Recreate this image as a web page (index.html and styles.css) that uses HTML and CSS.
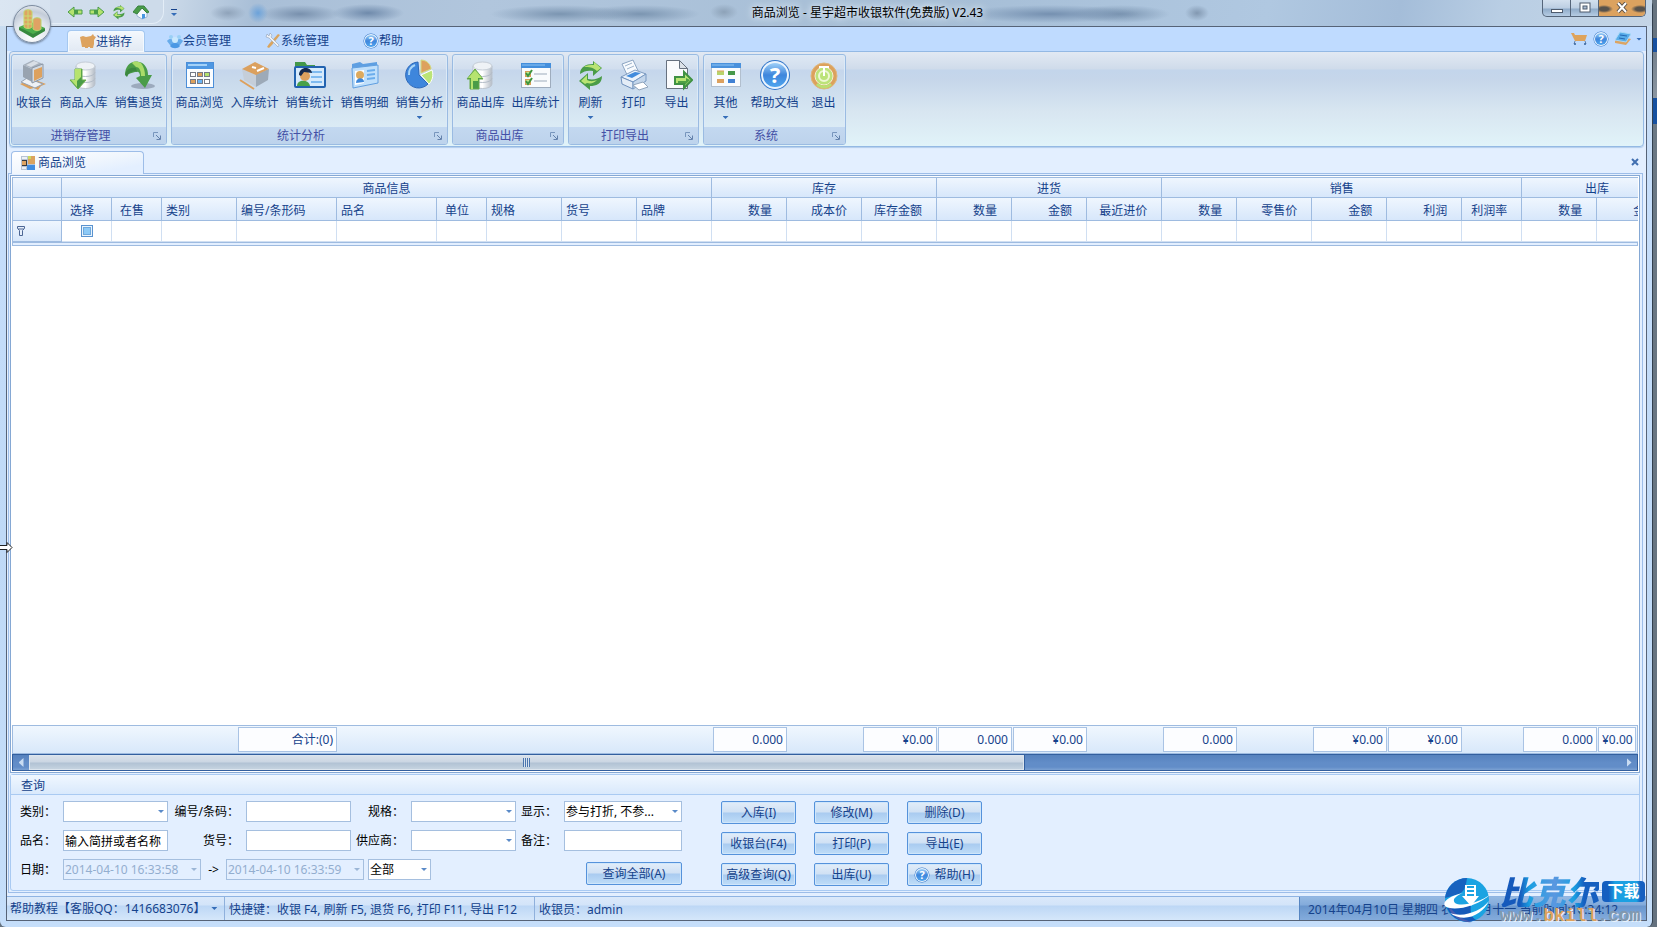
FILE: index.html
```
<!DOCTYPE html>
<html lang="zh-CN">
<head>
  <meta charset="UTF-8">
  <meta name="viewport" content="width=device-width, initial-scale=1">
  <title>商品浏览 - 星宇超市收银软件(免费版) V2.43</title>
  <link rel="stylesheet" href="styles.css">
</head>
<body>
  <!-- shared icons -->
  <svg class="defs" aria-hidden="true">
    <defs>
      <linearGradient id="gBlue" x1="0" y1="0" x2="0" y2="1"><stop offset="0" stop-color="#9fd0f8"/><stop offset=".5" stop-color="#3f86dc"/><stop offset="1" stop-color="#4fa5ee"/></linearGradient>
      <linearGradient id="gGrey" x1="0" y1="0" x2="1" y2="0"><stop offset="0" stop-color="#f7f9fb"/><stop offset=".5" stop-color="#ffffff"/><stop offset="1" stop-color="#b4bcc6"/></linearGradient>
      <symbol id="help" viewBox="0 0 32 32">
        <circle cx="16" cy="16" r="15" fill="#2f74c8"/>
        <circle cx="16" cy="16" r="14" fill="#eaf4fe"/>
        <circle cx="16" cy="16" r="12" fill="url(#gBlue)"/>
        <text x="16" y="24" text-anchor="middle" font-size="22" font-weight="bold" fill="#fff">?</text>
      </symbol>
      <symbol id="db" viewBox="0 0 32 32">
        <path d="M8 7v18c0 6 19 6 19 0V7z" fill="url(#gGrey)" stroke="#bcc4ce"/>
        <ellipse cx="17.500" cy="7" rx="9.500" ry="4" fill="#eef2f6" stroke="#c5cdd6"/>
        <path d="M8 13c0 6 19 6 19 0M8 19c0 6 19 6 19 0" fill="none" stroke="#b4bdc8"/>
      </symbol>
      <symbol id="refresh" viewBox="0 0 32 32">
        <path d="M5 15C5 8 11 5 18 5V2l9 7-9 8v-5c-5-1-9 0-13 3z" fill="#4a9c48"/>
        <path d="M9 8c3-2 6-2 10-2V3l7 6-4 3c-4-4-8-4-13-4z" fill="#b9e473"/>
        <path d="M27 17c0 8-6 10-12 10v4l-11-9 9-8v6c5 1 10 0 14-3z" fill="#4a9c48"/>
        <path d="M6 22l6-6v5c4 2 7 1 10 0-3 3-6 4-10 3l-2 1z" fill="#b9e473"/>
      </symbol>
      <symbol id="launch" viewBox="0 0 8 8">
        <path d="M.5 5V.5H5" fill="none" stroke="#7896bd"/>
        <path d="M3 3l4 4M7.500 3.500v4h-4" fill="none" stroke="#6482ac"/>
      </symbol>
    </defs>
  </svg>

  <div class="window">
    <header class="titlebar">
      <div class="quick">
        <button aria-label="后退"><svg viewBox="0 0 16 14"><path d="M1 7l6-5v3h8v4H7v3z" fill="#b5e36f" stroke="#4a9c48"/><path d="M7 9V5h4v4z" fill="#4a9c48"/></svg></button>
        <button aria-label="前进"><svg viewBox="0 0 16 14"><path d="M15 7L9 2v3H1v4h8v3z" fill="#b5e36f" stroke="#4a9c48"/><path d="M5 5h4v4H5z" fill="#4a9c48"/></svg></button>
        <button aria-label="刷新"><svg viewBox="0 0 32 32"><use href="#refresh"/></svg></button>
        <button aria-label="主页"><svg viewBox="0 0 16 16"><path d="M4 8l5-4 5 4v5l-5 2-5-3z" fill="#f5f9fd" stroke="#9bb5d2"/><path d="M0 8l5-6h6l5 6-2 1-5-5-5 6z" fill="#4a9c48" stroke="#388040"/><path d="M9 10h3v4l-3 1z" fill="#4796e0"/></svg></button>
      </div>
      <button class="customize" aria-label="自定义"></button>
      <h1>商品浏览 - 星宇超市收银软件(免费版) V2.43</h1>
      <div class="winbtns">
        <button aria-label="最小化"><svg viewBox="0 0 12 12"><rect x=".5" y="7.500" width="11" height="3" fill="#fff" stroke="#4e5b6d"/></svg></button>
        <button aria-label="最大化"><svg viewBox="0 0 12 12"><rect x="1" y="1" width="10" height="9" fill="#fff" stroke="#4e5b6d"/><rect x="4" y="4" width="4" height="3" fill="#a9bcd2" stroke="#4e5b6d"/></svg></button>
        <button class="close" aria-label="关闭"><svg viewBox="0 0 12 12"><path d="M2 1l8 9M10 1L2 10" stroke="#5b5148" stroke-width="4"/><path d="M2 1l8 9M10 1L2 10" stroke="#fff" stroke-width="2"/></svg></button>
      </div>
    </header>

    <button class="orb" aria-label="应用菜单">
      <svg viewBox="0 0 32 32"><path d="M3 19l12-5 14 6-12 9z" fill="#4cae4c"/><path d="M3 19l14 7v4L3 22zM17 26l12-6v3l-12 7z" fill="#37893e"/><path d="M8 4c0-3 8-3 8 0v15c-2 2-6 2-8 0z" fill="#dea462" stroke="#c3d66c"/><path d="M8 8h8M8 12h8M8 16h8M12 2v18" stroke="#c9dc73"/><path d="M17 12c0-3 8-3 8 0v9c-2 2-6 2-8 0z" fill="#e0a264" stroke="#b9d46c"/></svg>
    </button>

    <div class="client">
      <nav class="tabs">
        <a class="active" href="#"><svg viewBox="0 0 16 16"><path d="M0 3l3-1 3 1 5-1 2-2 1 2 2 1-2 3v4l-1 4h-3v-1H8v1H5v-1H2l-1-5z" fill="#dda35f"/></svg>进销存</a>
        <a href="#"><svg viewBox="0 0 16 16"><circle cx="4" cy="4" r="2" fill="#9ad0f6"/><circle cx="12" cy="4" r="2" fill="#9ad0f6"/><path d="M0 8c3-4 5-1 8-1s5-3 8 1l-3 4H3z" fill="#67abea"/><circle cx="8" cy="7" r="3" fill="#c9e8fd"/><path d="M3 13c2-4 8-4 10 0-2 3-8 3-10 0z" fill="#4b98e4"/></svg>会员管理</a>
        <a href="#"><svg viewBox="0 0 16 16"><path d="M13 1l2 1-8 10-3 3-2-1 2-3z" fill="#d9a560"/><path d="M2 1l2 2 1-3 2 2-1 2 8 8-1 2-9-9-3-1z" fill="#eef1f5" stroke="#8595aa" stroke-width=".5"/></svg>系统管理</a>
        <a href="#"><svg viewBox="0 0 32 32"><use href="#help"/></svg>帮助</a>
        <div class="tools">
          <button aria-label="购物车"><svg viewBox="0 0 16 16"><path d="M0 2h3l1 2h12l-2 6H4z" fill="#dea35c"/><path d="M4 10l-1 3M14 10l1 3" stroke="#617fa8"/><circle cx="4" cy="13" r="1" fill="#35629d"/><circle cx="14" cy="13" r="1" fill="#35629d"/></svg></button>
          <button aria-label="帮助"><svg viewBox="0 0 32 32"><use href="#help"/></svg></button>
          <button class="drop" aria-label="皮肤"><svg viewBox="0 0 16 16"><path d="M0 10l5-5 11 3-5 6-11-2z" fill="#dca463"/><path d="M0 9l5-8 11 2-5 8z" fill="#57ace9" stroke="#a8d8f6"/><path d="M5 4l7 1M4 7l6 1" stroke="#2469b4"/></svg></button>
        </div>
      </nav>

      <section class="ribbon">
        <div class="group">
          <div class="items">
            <button class="wide3"><svg viewBox="0 0 32 32"><path d="M2 25l13-5 13 5-5 2-3 4-4-2-4 1z" fill="#dca05c"/><path d="M3 23l6-4 16 6-8 4z" fill="#eef1f5" stroke="#96a1b0"/><path d="M5 6l10-5 10 4-10 5z" fill="#a7b1bd"/><path d="M8 6l8-4 5 2-8 4z" fill="#d9dfe6"/><path d="M5 6l9 4v13l-9-5z" fill="#98a3b0"/><path d="M14 9l11-4v14l-11 5z" fill="#d3dae2" stroke="#8b97a7"/><path d="M16 11l8-3v10l-8 4z" fill="#dda15e"/></svg>收银台</button>
            <button class="wide4"><svg viewBox="0 0 32 32"><use href="#db"/><path d="M7 10h7v11h4l-8 9-8-9h5z" fill="#4a9c48" stroke="#6dae4a"/><path d="M7 10h6v8l-4 4v6l-6-7h4z" fill="#b6e36f"/></svg>商品入库</button>
            <button class="wide4"><svg viewBox="0 0 32 32"><ellipse cx="20" cy="27" rx="12" ry="3" fill="#9caabd"/><path d="M2 16C2 6 9 1 16 3c6 1 9 7 9 13h4l-7 13-9-10 4-2c0-4-2-5-5-4z" fill="#4a9c48"/><path d="M9 4c3-3 7-1 9 0 3 4 4 8 4 13l-4 0c0-6-2-9-5-9z" fill="#a9db69"/><path d="M2 16c1-6 6-8 11-7l1 4c-4-2-8 0-10 5z" fill="#3b8840"/></svg>销售退货</button>
          </div>
          <footer><span>进销存管理</span><svg viewBox="0 0 8 8"><use href="#launch"/></svg></footer>
        </div>

        <div class="group">
          <div class="items">
            <button class="wide4"><svg viewBox="0 0 32 32"><rect x="2.500" y="3.500" width="27" height="25" fill="#fbfdff" stroke="#4b8ed8"/><rect x="3" y="4" width="26" height="6" fill="#4e97e2"/><path d="M4 6h19" stroke="#a3d1f8" stroke-width="2"/><g stroke="#767b86"><rect x="6.500" y="13.500" width="5" height="4" fill="#fff"/><rect x="13.500" y="13.500" width="5" height="4" fill="#dda15c"/><rect x="20.500" y="13.500" width="5" height="4" fill="#b4e26e"/><rect x="6.500" y="20.500" width="5" height="4" fill="#dda15c"/><rect x="13.500" y="20.500" width="5" height="4" fill="#6ab4f4"/><rect x="20.500" y="20.500" width="5" height="4" fill="#fff"/></g></svg>商品浏览</button>
            <button class="wide4"><svg viewBox="0 0 32 32"><path d="M3 10l14 5v13L5 21z" fill="#c5ced9"/><path d="M17 15l13-5-1 11-12 7z" fill="#9daab8"/><path d="M3 10L16 3l14 7-13 6z" fill="#dba05e"/><path d="M13 8l4 1M18 12l7-3" stroke="#fff" stroke-width="2"/><path d="M1 21l14 9" stroke="#dda15e" stroke-width="2"/></svg>入库统计</button>
            <button class="wide4"><svg viewBox="0 0 32 32"><path d="M1 3h10l2 3h8v5H1z" fill="#43984a"/><rect x="1" y="8" width="30" height="20" rx="1" fill="#d6eafc" stroke="#2263b0" stroke-width="2"/><path d="M17 13h11M17 18h11M17 23h11" stroke="#7fbaf0" stroke-width="2"/><path d="M3 27c0-7 12-7 13 0z" fill="#48a049"/><circle cx="11" cy="17" r="5" fill="#dda15e"/><path d="M5 16c0-9 12-9 13-2l-8-1-3 4z" fill="#172b4e"/></svg>销售统计</button>
            <button class="wide4"><svg viewBox="0 0 32 32"><path d="M3 5l8-2 3 2 14-2v6H3z" fill="#5e9fe2"/><path d="M3 9l26-3v18L4 29z" fill="#bfdffb" stroke="#609fe0"/><path d="M6 12l9-1v13l-9 2z" fill="#fff"/><path d="M18 12l8-1M18 16l8-1M18 20l8-1" stroke="#6badec" stroke-width="2"/><circle cx="11" cy="16" r="4" fill="#ddaa5e"/><path d="M7 24c0-6 8-6 8-1z" fill="#3e88da"/></svg>销售明细</button>
            <button class="wide4 more"><svg viewBox="0 0 32 32"><path d="M14 3a13 13 0 1 0 10 22l-9-9z" fill="#3e86dc" stroke="#2d69b9"/><path d="M11 6a10 10 0 0 0-6 10" stroke="#a8d5f8" stroke-width="2" fill="none"/><path d="M17 14V1c6 0 10 5 10 9z" fill="#dda15e" stroke="#d2dc81"/><path d="M17 16l11-5c2 6 0 11-3 14z" fill="#bbe477" stroke="#fff"/></svg>销售分析</button>
          </div>
          <footer><span>统计分析</span><svg viewBox="0 0 8 8"><use href="#launch"/></svg></footer>
        </div>

        <div class="group">
          <div class="items">
            <button class="wide4"><svg viewBox="0 0 32 32"><use href="#db"/><path d="M5 30V20H2l8-10 8 10h-4v10z" fill="#4a9c48" stroke="#69ab49"/><path d="M3 19l7-8 7 8h-4v3H8v8H6V19z" fill="#b6e36f"/></svg>商品出库</button>
            <button class="wide4"><svg viewBox="0 0 32 32"><rect x="1.500" y="4.500" width="29" height="24" fill="#f9fbfd" stroke="#9eacbd"/><rect x="1" y="4" width="30" height="5" fill="#438edc"/><path d="M2 6h23" stroke="#8bc3f4"/><path d="M14 15h13M14 22h13" stroke="#cbd3dc" stroke-width="2"/><g fill="#c7e990" stroke="#d79e58"><rect x="5.500" y="12.500" width="5" height="5"/><rect x="5.500" y="20.500" width="5" height="5"/></g><path d="M6 14l2 3 4-6M6 22l2 3 4-6" fill="none" stroke="#3f953f" stroke-width="2"/></svg>出库统计</button>
          </div>
          <footer><span>商品出库</span><svg viewBox="0 0 8 8"><use href="#launch"/></svg></footer>
        </div>

        <div class="group">
          <div class="items">
            <button class="wide2 more"><svg viewBox="0 0 32 32"><use href="#refresh"/></svg>刷新</button>
            <button class="wide2"><svg viewBox="0 0 32 32"><path d="M4 5l11-4 7 15-11 4z" fill="#f8fbfe" stroke="#8ca5c2"/><path d="M7 7l7-3M9 10l7-3" stroke="#9db3cb"/><path d="M3 18l14-7 11 4-13 8z" fill="#eaf2fb" stroke="#7e9bc0"/><path d="M8 17l9-4 6 1-9 5z" fill="#418bdc"/><path d="M3 18l12 5v7L4 25z" fill="#e4edf7" stroke="#6f91bd"/><path d="M15 23l13-8v7l-13 8z" fill="#c3d6eb" stroke="#7899c2"/><path d="M15 26l10-3 5 5-9 3z" fill="#fff" stroke="#91a5bc"/></svg>打印</button>
            <button class="wide2"><svg viewBox="0 0 32 32"><path d="M5.500 1.500h13l8 8v20h-21z" fill="#fafbfd" stroke="#67717f"/><path d="M18.500 1.500v8h8z" fill="#dce2e9" stroke="#67717f"/><path d="M14 18h9v-5l8 8-8 8v-4h-9z" fill="#b8e573" stroke="#3f9143" stroke-width="2"/><path d="M17 22h8v-3l4 2-5 5v-2h-7z" fill="#4fa145"/></svg>导出</button>
          </div>
          <footer><span>打印导出</span><svg viewBox="0 0 8 8"><use href="#launch"/></svg></footer>
        </div>

        <div class="group">
          <div class="items">
            <button class="wide2 more"><svg viewBox="0 0 32 32"><rect x="1.500" y="4.500" width="29" height="23" fill="#fafcfe" stroke="#b2bfce"/><rect x="1" y="4" width="30" height="5" fill="#4a91dc"/><path d="M2 6h22" stroke="#8cc5f5"/><rect x="7" y="12" width="7" height="4" fill="#b8d36c"/><path d="M7 12h7" stroke="#dda15e"/><rect x="18" y="12" width="7" height="4" fill="#46984a"/><rect x="7" y="20" width="7" height="4" fill="#dda15e"/><rect x="18" y="20" width="7" height="4" fill="#4081d4"/></svg>其他</button>
            <button class="wide4"><svg viewBox="0 0 32 32"><use href="#help"/></svg>帮助文档</button>
            <button class="wide2"><svg viewBox="0 0 32 32"><circle cx="16" cy="17" r="13" fill="#dca15c" stroke="#e0b77d"/><circle cx="16" cy="17" r="9" fill="#bce37a" stroke="#f4f0d4"/><circle cx="16" cy="17" r="5" fill="none" stroke="#eef8d4" stroke-width="2"/><path d="M16 8v9M11 8h10" stroke="#fff" stroke-width="2"/><path d="M9 25c4 4 10 4 14 0" stroke="#b9df72" stroke-width="3" fill="none"/></svg>退出</button>
          </div>
          <footer><span>系统</span><svg viewBox="0 0 8 8"><use href="#launch"/></svg></footer>
        </div>
      </section>

      <div class="doctabs">
        <a href="#"><svg viewBox="0 0 14 14"><rect width="14" height="14" fill="#b6c3d3"/><path d="M1 1h5v2H1z" fill="#eef2f7"/><path d="M7 0h7v8H7z" fill="#dba35f"/><path d="M7 0h3v3H7z" fill="#c8da63"/><path d="M1 4h5v6H1z" fill="#35393f"/><path d="M1 5h4v4H1z" fill="#dea360"/><path d="M6 9h8v5H6z" fill="#408ce0"/><path d="M1 11h4v2H1z" fill="#e9eef4"/></svg>商品浏览</a>
        <button aria-label="关闭标签"><svg viewBox="0 0 8 8"><path d="M1 1l6 6M7 1L1 7" stroke="#416fb0" stroke-width="2"/></svg></button>
      </div>

      <main class="page">
        <section class="goods">
          <table class="sheet">
            <colgroup>
              <col class="c-ind"><col class="c-50"><col class="c-50"><col class="c-75"><col class="c-100"><col class="c-100"><col class="c-50"><col class="c-75"><col class="c-75"><col class="c-75">
              <col class="c-75"><col class="c-75"><col class="c-75"><col class="c-75"><col class="c-75"><col class="c-75">
              <col class="c-75"><col class="c-75"><col class="c-75"><col class="c-75"><col class="c-60"><col class="c-75"><col>
            </colgroup>
            <thead>
              <tr class="bands">
                <th></th><th colspan="9">商品信息</th><th colspan="3">库存</th><th colspan="3">进货</th><th colspan="5">销售</th><th class="out" colspan="2">出库</th>
              </tr>
              <tr class="cols">
                <th></th><th class="mid">选择</th><th class="mid">在售</th><th>类别</th><th>编号/条形码</th><th>品名</th><th class="mid">单位</th><th>规格</th><th>货号</th><th>品牌</th>
                <th class="num">数量</th><th class="num">成本价</th><th class="num">库存金额</th>
                <th class="num">数量</th><th class="num">金额</th><th class="num">最近进价</th>
                <th class="num">数量</th><th class="num">零售价</th><th class="num">金额</th><th class="num">利润</th><th class="num">利润率</th>
                <th class="num">数量</th><th class="cut">金额</th>
              </tr>
            </thead>
            <tbody>
              <tr class="filter">
                <th><svg viewBox="0 0 8 10"><path d="M.5.500h7v2l-2 2v5h-3v-5l-2-2z" fill="#e6effb" stroke="#4c6694"/><path d="M1 3h6" stroke="#4c6694"/></svg></th>
                <td class="tick"><input type="checkbox" aria-label="选择"></td>
                <td></td><td></td><td></td><td></td><td></td><td></td><td></td><td></td><td></td><td></td><td></td><td></td><td></td><td></td><td></td><td></td><td></td><td></td><td></td><td></td><td></td>
              </tr>
            </tbody>
          </table>
          <div class="divider"></div>
          <div class="rows"></div>
          <table class="totals">
            <colgroup>
              <col class="c-ind"><col class="c-50"><col class="c-50"><col class="c-75"><col class="c-100"><col class="c-100"><col class="c-50"><col class="c-75"><col class="c-75"><col class="c-75">
              <col class="c-75"><col class="c-75"><col class="c-75"><col class="c-75"><col class="c-75"><col class="c-75">
              <col class="c-75"><col class="c-75"><col class="c-75"><col class="c-75"><col class="c-60"><col class="c-75"><col>
            </colgroup>
            <tbody>
              <tr>
                <td></td><td></td><td></td><td></td><td><span>合计:(0)</span></td><td></td><td></td><td></td><td></td><td></td>
                <td><span>0.000</span></td><td></td><td><span>¥0.00</span></td>
                <td><span>0.000</span></td><td><span>¥0.00</span></td><td></td>
                <td><span>0.000</span></td><td></td><td><span>¥0.00</span></td><td><span>¥0.00</span></td><td></td>
                <td><span>0.000</span></td><td><span>¥0.00</span></td>
              </tr>
            </tbody>
          </table>
          <div class="scroll">
            <button class="left" aria-label="向左"></button>
            <div class="thumb"><i></i></div>
            <div class="track"></div>
            <button class="right" aria-label="向右"></button>
          </div>
        </section>

        <section class="query">
          <h2>查询</h2>
          <div class="query-body">
            <form class="fields">
              <label for="type">类别：</label>
              <div class="combo"><select id="type"><option></option></select></div>
              <label for="code">编号/条码：</label>
              <input type="text" id="code">
              <label for="spec">规格：</label>
              <div class="combo"><select id="spec"><option></option></select></div>
              <label for="show">显示：</label>
              <div class="combo"><select id="show"><option>参与打折, 不参...</option></select></div>

              <label for="name">品名：</label>
              <input type="text" id="name" value="输入简拼或者名称">
              <label for="artno">货号：</label>
              <input type="text" id="artno">
              <label for="vendor">供应商：</label>
              <div class="combo"><select id="vendor"><option></option></select></div>
              <label for="memo">备注：</label>
              <input type="text" id="memo">

              <label for="from">日期：</label>
              <div class="dates">
                <div class="combo off"><input type="text" id="from" value="2014-04-10 16:33:58" disabled></div>
                <label for="to">-&gt;</label>
                <div class="combo off"><input type="text" id="to" value="2014-04-10 16:33:59" disabled></div>
                <div class="combo range"><select aria-label="日期范围"><option>全部</option></select></div>
                <button type="button" class="btn">查询全部(A)</button>
              </div>
            </form>
            <div class="actions">
              <button class="btn">入库(I)</button>
              <button class="btn">修改(M)</button>
              <button class="btn">删除(D)</button>
              <button class="btn">收银台(F4)</button>
              <button class="btn">打印(P)</button>
              <button class="btn">导出(E)</button>
              <button class="btn">高级查询(Q)</button>
              <button class="btn">出库(U)</button>
              <button class="btn"><svg viewBox="0 0 32 32"><use href="#help"/></svg>帮助(H)</button>
            </div>
          </div>
        </section>
      </main>

      <footer class="status">
        <a class="guide" href="#">帮助教程【客服QQ：1416683076】</a>
        <span class="keys">快捷键：收银 F4, 刷新 F5, 退货 F6, 打印 F11, 导出 F12</span>
        <span class="user">收银员：admin</span>
        <span class="clock">2014年04月10日 星期四 农历 三月十一 当前时间:16:34:12</span>
      </footer>
    </div>
  </div>

  <svg class="cursor" viewBox="0 0 13 11"><path d="M0 3.500h7V.500l5 5-5 5v-3H0" fill="#fff" stroke="#222"/></svg>

  <div class="brand">
    <svg viewBox="0 0 50 46">
      <circle cx="24" cy="23" r="22" fill="#1ba3e2"/>
      <path d="M24 1A22 22 0 0 0 2 21l14-4c5-2 7-8 8-16z" fill="#1762bf"/>
      <path d="M4 31c8 0 16-1 24-4-1 8 0 13 5 16A22 22 0 0 1 4 31z" fill="#1559b9"/>
      <path d="M5 28c8 10 13 14 24 17A22 22 0 0 1 5 28z" fill="#4a5db0"/>
      <path d="M22 8h11v11h3l-8 10-9-10h3z" fill="#fff"/>
      <path d="M24 10h7M24 14h7M24 18h7" stroke="#1ba3e2" stroke-width="2"/>
      <path d="M20 16C6 19-1 25 2 29c5 5 30 3 46-12-12 9-30 13-36 9-3-3 0-7 8-10z" fill="#fff"/>
      <path d="M7 36c14 5 31-2 39-12-6 13-24 23-39 12z" fill="#fff"/>
    </svg>
    <div class="brand-text">
      <div class="brand-name"><b>比克尔</b><em>下载</em></div>
      <div class="brand-url">www.<i>bkill</i>.com</div>
    </div>
  </div>
</body>
</html>
```
FILE: styles.css
```
* {
  box-sizing: border-box;
}

body {
  margin: 0;
  height: 100vh;
  overflow: hidden;
  font-family: "Noto Sans", "Noto Sans CJK SC", sans-serif;
  font-size: 12px;
  line-height: 16px;
  color: #15428b;
  background: linear-gradient(#66737f 38px, #1750a0 38px, #1750a0 52px, #74818e 52px, #8b96a1 98px, #1550a0 98px, #1550a0 124px, #6b7884 124px, #65727f);
}

button, input, select {
  font: inherit;
  color: inherit;
  margin: 0;
}

button {
  padding: 0;
  border: none;
  background: none;
}

a {
  color: inherit;
  text-decoration: none;
}

svg {
  display: block;
  flex: none;
}

.defs {
  position: absolute;
  width: 0;
  height: 0;
}

.window {
  position: relative;
  display: flex;
  flex-direction: column;
  height: 100vh;
  margin-right: 4px;
  padding: 0 5px 6px 6px;
  border-right: 1px solid #33404f;
  border-radius: 0 6px 6px 6px;
  background: linear-gradient(#c9dcef, #c6defb 200px, #bfd9f6 540px, #c5defa);
}

/* title bar */
.titlebar {
  position: relative;
  display: flex;
  align-items: flex-start;
  height: 26px;
  margin: 0 -5px 0 -6px;
  padding: 0 6px 0 50px;
  background:
    radial-gradient(ellipse 18px 8px at 228px 13px, #8fa3ba, transparent),
    radial-gradient(ellipse 10px 10px at 258px 13px, #6ba2da, transparent),
    radial-gradient(ellipse 40px 9px at 300px 14px, #7890ad, transparent),
    radial-gradient(ellipse 36px 9px at 368px 13px, #6f8aab, transparent),
    radial-gradient(ellipse 70px 9px at 560px 14px, #7b95b1, transparent),
    radial-gradient(ellipse 60px 9px at 640px 14px, #7b95b1, transparent),
    radial-gradient(ellipse 14px 8px at 724px 12px, #8da2b8, transparent),
    radial-gradient(ellipse 90px 9px at 1050px 14px, #7590b0, transparent),
    radial-gradient(ellipse 50px 9px at 1120px 14px, #7b95b1, transparent),
    radial-gradient(ellipse 12px 8px at 1197px 13px, #8298b1, transparent),
    linear-gradient(100deg, #dbe6f2, #cddbea 160px, #a9bfd7 250px, #b1c6dd 480px, #a5bdd5 900px, #b0c8e1 1250px, #a4bdd9 1380px, #b9cee4 1480px, #c4d5e6);
}

.titlebar h1 {
  flex: 1;
  margin: 5px 0 0 16px;
  text-align: center;
  font-size: 12px;
  font-weight: normal;
  color: #000;
  text-shadow: 0 0 6px #e6f0fa, 0 0 10px #e6f0fa;
}

.quick {
  display: flex;
  align-items: center;
  gap: 6px;
  height: 24px;
  padding: 0 14px 0 17px;
  border-bottom: 1px solid #e3edf7;
  border-right: 1px solid #e3edf7;
  border-radius: 0 0 12px 0;
  background: rgba(205, 219, 234, 0.6);
}

.quick svg {
  width: 16px;
  height: 16px;
}

.customize {
  width: 6px;
  height: 7px;
  margin: 9px 0 0 7px;
  border-top: 1px solid #15428b;
}

.customize::after, .drop::after, .more::after, .guide::after, .combo::after {
  content: "";
  display: block;
  width: 6px;
  height: 3px;
  background: #356db8;
  clip-path: polygon(0 0, 100% 0, 50% 100%);
}

.customize::after {
  margin-top: 3px;
}

.winbtns {
  display: flex;
  height: 17px;
  border: 1px solid #55657a;
  border-top: none;
  border-radius: 0 0 5px 5px;
  overflow: hidden;
  background: linear-gradient(#d3e0ee, #bccee2 8px, #8fabc9 9px, #b6cce3);
}

.winbtns button {
  display: flex;
  justify-content: center;
  align-items: center;
  width: 28px;
  border-right: 1px solid #55657a;
}

.winbtns .close {
  width: 46px;
  border-right: none;
  background: radial-gradient(ellipse 9px 4px at 5px 9px, #57524c 50%, transparent), radial-gradient(ellipse 9px 4px at 41px 9px, #57524c 50%, transparent), #dca25f;
}

.winbtns svg {
  width: 12px;
  height: 12px;
}

.orb {
  position: absolute;
  left: 13px;
  top: 5px;
  width: 38px;
  height: 38px;
  padding: 2px;
  z-index: 2;
  border: 1px solid #7d8ca0;
  border-radius: 50%;
  background: radial-gradient(circle at 50% 85%, #ffffff, #dfe5ec 50%, #c3ccd8 70%, #f4f7fa);
  box-shadow: 0 1px 2px #6d7f97;
}

.orb svg {
  width: 32px;
  height: 32px;
}

.client {
  flex: 1;
  min-height: 0;
  display: flex;
  flex-direction: column;
  border: 1px solid #566377;
  background: #e3efff;
}

/* ribbon tabs */
.tabs {
  display: flex;
  align-items: flex-end;
  gap: 10px;
  height: 24px;
  padding: 0 4px 0 60px;
  background: #bfdbff;
}

.tabs a {
  display: flex;
  align-items: center;
  height: 21px;
  padding: 0 12px;
}

.tabs a svg, .tools svg {
  width: 16px;
  height: 16px;
}

.tabs .active {
  position: relative;
  z-index: 1;
  height: 22px;
  margin-bottom: -1px;
  border: 1px solid #a5c8f0;
  border-bottom: none;
  border-radius: 4px 4px 0 0;
  background: linear-gradient(#f4f8fd, #e1e9f3);
  box-shadow: inset 0 0 0 1px #f3f9ff;
}

.tools {
  display: flex;
  align-items: center;
  gap: 6px;
  height: 24px;
  margin-left: auto;
}

.drop {
  display: flex;
  align-items: center;
  gap: 5px;
}

/* ribbon */
.ribbon {
  display: flex;
  gap: 4px;
  height: 96px;
  margin: 0 2px;
  padding: 2px 1px 1px;
  border: 1px solid #94b9e4;
  border-radius: 4px;
  background: linear-gradient(#e2e9f3, #cfdbea 17px, #c3d5eb 18px, #c6d6ea 28px, #d8e6f1 60px, #e1f3f9);
  box-shadow: 0 1px 1px #b2cdec;
}

.group {
  display: flex;
  flex-direction: column;
  padding: 0;
  border: 1px solid #9abbe2;
  border-radius: 3px;
  background: linear-gradient(#dee8f4, #d1deee 14px, #c5d6ec 15px, #c9daec 26px, #dbebf5 72px);
  box-shadow: inset 0 0 0 1px #dceaf7;
}

.items {
  display: flex;
  flex: 1;
}

.items button {
  display: flex;
  flex-direction: column;
  align-items: center;
  padding-top: 4px;
  white-space: nowrap;
}

.items svg {
  width: 32px;
  height: 32px;
  margin-bottom: 4px;
}

.wide2 {
  width: 43px;
}

.wide3 {
  width: 44px;
}

.wide4 {
  width: 55px;
}

.more::after {
  margin-top: 5px;
}

.group footer {
  display: flex;
  align-items: center;
  height: 17px;
  padding-right: 5px;
  border-radius: 0 0 2px 2px;
  background: linear-gradient(#c3d8f0, #bdd3ec);
  color: #4450a6;
}

.group footer span {
  flex: 1;
  padding-right: 4px;
  text-align: center;
}

.group footer svg {
  width: 8px;
  height: 8px;
}

/* document tabs */
.doctabs {
  display: flex;
  justify-content: space-between;
  align-items: flex-end;
  height: 26px;
  padding: 0 7px 0 4px;
}

.doctabs a {
  display: flex;
  align-items: center;
  gap: 3px;
  width: 133px;
  height: 23px;
  margin-bottom: -1px;
  padding-left: 9px;
  z-index: 1;
  border: 1px solid #9dbde8;
  border-bottom: none;
  border-radius: 4px 4px 0 0;
  background: linear-gradient(170deg, #ffffff, #f0f6fd 50%, #e3efff 80%);
}

.doctabs a svg {
  width: 14px;
  height: 14px;
}

.doctabs button {
  height: 22px;
}

.doctabs button svg {
  width: 8px;
  height: 8px;
}

.page {
  flex: 1;
  min-height: 0;
  display: flex;
  flex-direction: column;
  margin: 0 3px 3px 1px;
  padding: 1px 2px 1px 1px;
  border: 1px solid #9dbde8;
}

/* goods grid */
.goods {
  flex: 1;
  min-height: 0;
  display: flex;
  flex-direction: column;
  padding: 1px;
  border: 1px solid #85a8d4;
  background: #fff;
}

table {
  width: 100%;
  table-layout: fixed;
  border-collapse: separate;
  border-spacing: 0;
}

.c-ind {
  width: 49px;
}

.c-50 {
  width: 50px;
}

.c-60 {
  width: 60px;
}

.c-75 {
  width: 75px;
}

.c-100 {
  width: 100px;
}

.sheet {
  border-top: 1px solid #9ebbe0;
  border-left: 1px solid #9ebbe0;
}

th, td {
  padding: 0;
  font-weight: normal;
  white-space: nowrap;
  overflow: hidden;
}

.sheet th {
  border-right: 1px solid #9ebbe0;
  border-bottom: 1px solid #9ebbe0;
  background: linear-gradient(#eff6fe, #d7e7fb);
}

.sheet tr > :last-child {
  border-right: none;
}

.bands th {
  height: 20px;
  padding-top: 2px;
}

.bands .out {
  padding-left: 34px;
}

.cols th {
  height: 23px;
  padding: 3px 0 0 4px;
  text-align: left;
}

.cols .mid {
  padding-left: 8px;
}

.cols .num {
  padding: 3px 14px 0 0;
  text-align: right;
}

.cols .cut {
  padding-left: 36px;
  text-overflow: clip;
}

.filter td {
  height: 21px;
  border-right: 1px solid #d0dff2;
  border-bottom: 1px solid #d0dff2;
}

.filter svg {
  width: 8px;
  height: 10px;
  margin-left: 4px;
}

.filter .tick {
  text-align: center;
  line-height: 10px;
}

.tick input {
  appearance: none;
  width: 12px;
  height: 12px;
  border: 1px solid #5b93cf;
  background: #8dcaf7;
  box-shadow: inset 0 0 0 1px #e9f4fd, inset 0 0 0 2px #6fa9dd;
  vertical-align: middle;
}

.divider {
  height: 4px;
  border: 1px solid #9ebbe0;
  background: #e3efff;
}

.rows {
  flex: 1;
}

.totals {
  height: 29px;
  border: 1px solid #9ebbe0;
  background: linear-gradient(#f0f7fe, #d8e8fa);
}

.totals td {
  padding-left: 1px;
}

.totals span {
  display: block;
  height: 25px;
  padding: 4px 3px 0;
  border: 1px solid #a9c3e4;
  background: #fcfdff;
  text-align: right;
}

.totals td:last-child {
  padding-right: 1px;
}

.scroll {
  display: flex;
  height: 17px;
  border: 1px solid #335f9e;
  background: linear-gradient(#5682be, #628dc8 8px, #628dc8 12px, #7ba1d3);
}

.scroll button {
  width: 16px;
  display: flex;
  justify-content: center;
  align-items: center;
}

.scroll button::after {
  content: "";
  width: 5px;
  height: 9px;
  background: #c9dcf2;
}

.scroll .left::after {
  clip-path: polygon(100% 0, 100% 100%, 0 50%);
}

.scroll .right::after {
  clip-path: polygon(0 0, 100% 50%, 0 100%);
}

.thumb {
  flex: 5;
  display: flex;
  justify-content: center;
  align-items: center;
  border: 1px solid #dce5ee;
  background: linear-gradient(#d9e1ea, #cbd6e3 6px, #b1c2d4 7px, #c5d3e0);
}

.thumb i {
  width: 7px;
  height: 9px;
  background: repeating-linear-gradient(90deg, #4b75ae, #4b75ae 1px, #d7e2ee 1px, #d7e2ee 2px);
}

.track {
  flex: 3;
  border-left: 1px solid #335f9e;
}

/* query panel */
.query {
  height: 117px;
  margin-top: 1px;
  border: 1px solid #a9caf2;
  border-radius: 3px;
}

.query h2 {
  height: 20px;
  margin: 0;
  padding: 3px 10px;
  border-bottom: 1px solid #a9caf2;
  background: linear-gradient(#f0f7ff, #d9e9fc);
  font-size: 12px;
  font-weight: normal;
}

.query-body {
  display: flex;
  gap: 39px;
  padding-top: 6px;
}

.fields {
  display: grid;
  grid-template-columns: 52px 105px 78px 105px 60px 105px 48px 118px;
  grid-auto-rows: 21px;
  row-gap: 8px;
  color: #000;
}

.fields label {
  padding-right: 7px;
  line-height: 21px;
  text-align: right;
  white-space: nowrap;
}

.fields input, .fields select {
  display: block;
  width: 100%;
  height: 21px;
  padding: 0 1px;
  border: 1px solid #a5bfdf;
  border-radius: 0;
  background: #fff;
  outline: none;
}

.fields select {
  appearance: none;
}

.combo {
  position: relative;
}

.combo::after {
  position: absolute;
  right: 4px;
  top: 9px;
  background: #5a8ac8;
}

.off::after {
  background: #9bb6d6;
}

.dates {
  grid-column: 2 / -1;
  display: flex;
}

.dates .off {
  width: 138px;
}

.dates .off input {
  background: #e3efff;
  color: #93aecf;
}

.dates label {
  width: 25px;
  padding: 0;
  text-align: center;
}

.dates .range {
  width: 63px;
  margin-left: 4px;
}

.btn {
  display: flex;
  justify-content: center;
  align-items: center;
  height: 23px;
  border: 1px solid #5592db;
  border-radius: 2px;
  background: linear-gradient(#e2edf9, #d0e1f4 10px, #a9cbf0 11px, #bfddf8);
  box-shadow: inset 0 0 0 1px #cfe6fb;
  color: #15428b;
  white-space: nowrap;
}

.btn svg {
  width: 16px;
  height: 16px;
  margin-right: 4px;
}

.dates .btn {
  width: 96px;
  margin: 3px 0 0 auto;
}

.actions {
  display: grid;
  grid-template-columns: repeat(3, 75px);
  grid-auto-rows: 23px;
  gap: 8px 18px;
}

/* status bar */
.status {
  display: flex;
  height: 24px;
  border-top: 1px solid #8fb4e3;
  line-height: 25px;
  white-space: nowrap;
  background: linear-gradient(#dbe9fa, #d3e4f9 8px, #bdd7f5 9px, #d5e7fa);
}

.guide {
  display: flex;
  align-items: center;
  gap: 6px;
  width: 218px;
  padding-left: 3px;
  border-right: 1px solid #8fb0dc;
}

.keys {
  width: 310px;
  padding-left: 4px;
  border-right: 1px solid #8fb0dc;
}

.user {
  padding-left: 4px;
}

.clock {
  width: 347px;
  margin-left: auto;
  padding-left: 8px;
  border-left: 1px solid #5786c2;
  background: linear-gradient(#94b8e2, #83abdb 8px, #6996cd 9px, #84acdc);
}

/* things lying over the window */
.cursor {
  position: absolute;
  left: 0;
  top: 542px;
  width: 13px;
  height: 11px;
}

.brand {
  position: absolute;
  right: 12px;
  bottom: 4px;
  display: flex;
  align-items: flex-end;
  gap: 7px;
}

.brand svg {
  width: 50px;
  height: 46px;
}

.brand-name {
  display: flex;
  align-items: center;
  height: 34px;
}

.brand-name b {
  font-family: "Noto Sans CJK SC", sans-serif;
  font-size: 33px;
  font-style: italic;
  font-weight: 900;
  line-height: 32px;
  color: transparent;
  background: linear-gradient(90deg, #1559bb 20%, #1ba0e2 30%, #5a97e0 55%, #1ba0e2 75%, #155fc0 85%);
  -webkit-background-clip: text;
  background-clip: text;
}

.brand-name em {
  width: 43px;
  margin-left: 3px;
  border-radius: 4px;
  background: linear-gradient(90deg, #155fc0 15%, #1ba0e2 30%, #1ba0e2 80%, #155fc0 90%);
  font-size: 16px;
  font-style: normal;
  font-weight: bold;
  line-height: 21px;
  text-align: center;
  color: #fff;
}

.brand-url {
  height: 15px;
  font-family: "Liberation Mono", monospace;
  font-size: 18px;
  font-weight: bold;
  line-height: 16px;
  color: #8398ae;
  text-shadow: 1px 1px #e8f1fa;
}

.brand-url i {
  font-style: normal;
  color: #dea25c;
}
```
